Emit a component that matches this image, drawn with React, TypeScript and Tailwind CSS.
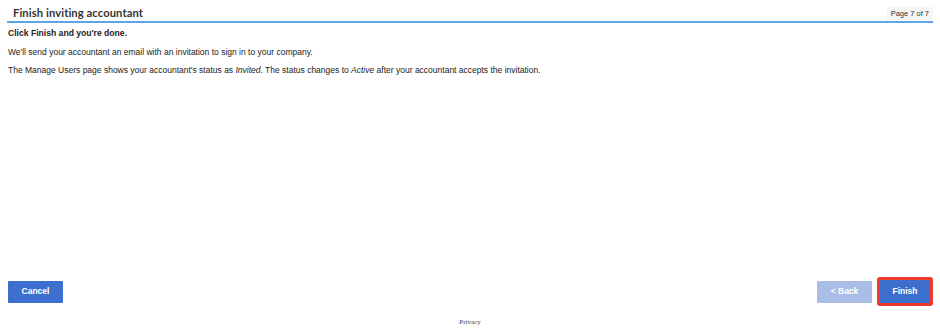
export default function App() {
  return (
    <div className="flex h-[336px] w-[940px] flex-col bg-white font-['Liberation_Sans',Arial,sans-serif] text-[#222]">
      <div className="mx-[7px] mt-[4px] flex h-[19px] items-end justify-between border-b-2 border-[#5fa3e8]">
        <h1 className="pb-[3px] pl-[6px] font-['Lato',sans-serif] text-[11.2px] font-bold leading-none tracking-[0.1px] text-[#333]">
          Finish inviting accountant
        </h1>
        <span className="mb-[1px] bg-[#f5f5f5] px-[4px] pb-[3px] pt-[3px] text-[7.5px] leading-none text-[#333]">Page 7 of 7</span>
      </div>
      <div className="flex-1 px-[8px] pt-[6px] text-[8.5px] leading-none">
        <p className="text-[8.6px] font-bold">Click Finish and you&apos;re done.</p>
        <p className="mt-[10px]">We&apos;ll send your accountant an email with an invitation to sign in to your company.</p>
        <p className="mt-[10px]">
          The Manage Users page shows your accountant&apos;s status as <i>Invited</i>. The status changes to <i>Active</i> after your accountant accepts the invitation.
        </p>
      </div>
      <div className="flex items-center justify-between pl-[8px] pr-[7px]">
        <button className="h-[22px] w-[55px] rounded-[1px] bg-[#3d6fcf] text-[8.5px] font-bold text-white">Cancel</button>
        <div className="flex items-center gap-[5px]">
          <button className="h-[22px] w-[55px] rounded-[1px] bg-[#a9bde6] text-[8.5px] font-bold text-white">&lt; Back</button>
          <div className="rounded-[3px] border-[3px] border-[#ec3b2c]">
            <button className="block h-[23px] w-[50px] bg-[#3d6fcf] text-[8.5px] font-bold text-white">Finish</button>
          </div>
        </div>
      </div>
      <div className="flex h-[30px] items-start justify-center pt-[13px]">
        <span className="font-['Liberation_Serif',serif] text-[7px] leading-none text-[#444]">Privacy</span>
      </div>
    </div>
  );
}
